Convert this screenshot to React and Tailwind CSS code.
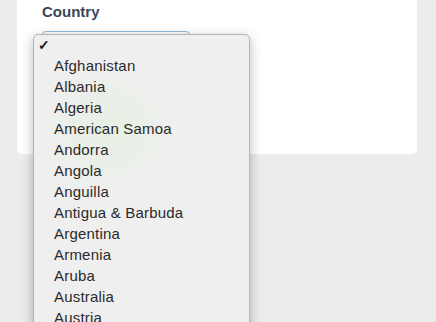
const countries = [
  "Afghanistan",
  "Albania",
  "Algeria",
  "American Samoa",
  "Andorra",
  "Angola",
  "Anguilla",
  "Antigua & Barbuda",
  "Argentina",
  "Armenia",
  "Aruba",
  "Australia",
  "Austria",
  "Azerbaijan",
];

export default function App() {
  return (
    <div
      className="h-[322px] w-[436px] overflow-hidden bg-[#ececec]"
      style={{ fontFamily: '"Liberation Sans", Arial, sans-serif' }}
    >
      {/* CARD */}
      <div className="ml-[17px] w-[400px] rounded-b-[5px] bg-white px-[25px] pt-[3px] pb-[89px]">
        <label className="block text-[15px] leading-[18px] font-bold text-[#3b4759]">
          Country
        </label>

        {/* SELECT + OPEN MENU */}
        <div className="relative mt-[10px] h-[34px] w-[148px] rounded-[4px] border border-[#8fb8dc] bg-white">
          <div className="absolute top-[2px] left-[-10px] z-10 w-[217px] overflow-hidden rounded-t-[5px] border border-[#b4b4b4] bg-[#efefef] shadow-[0_3px_12px_rgba(0,0,0,0.28)]">
            <div className="pointer-events-none absolute top-[25px] left-[5px] h-[140px] w-[140px] rounded-full bg-[radial-gradient(circle,rgba(220,240,212,0.45)_0%,rgba(220,240,212,0)_70%)]" />
            <ul className="relative text-[15px] tracking-[0.2px] text-[#2a2a2a]">
              <li className="flex h-[21px] items-center pl-[4px] text-[14px] font-bold text-[#222]">
                ✓
              </li>
              {countries.map((c) => (
                <li key={c} className="flex h-[21px] items-center pl-[20px]">
                  {c}
                </li>
              ))}
            </ul>
          </div>
        </div>
      </div>
    </div>
  );
}
